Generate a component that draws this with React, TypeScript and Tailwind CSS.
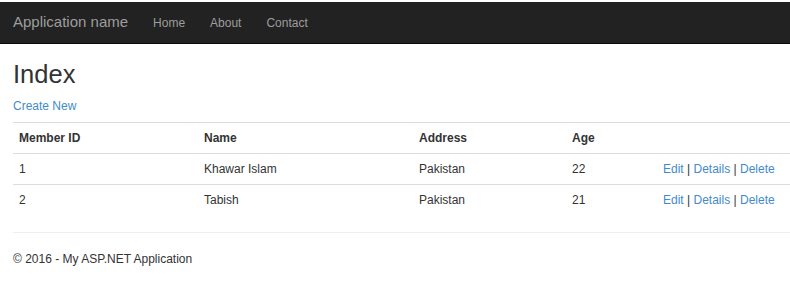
const members = [
  { id: '1', name: 'Khawar Islam', address: 'Pakistan', age: '22' },
  { id: '2', name: 'Tabish', address: 'Pakistan', age: '21' },
]

const Actions = () => (
  <span>
    <a href="#" className="text-[#428bca]">Edit</a> |{' '}
    <a href="#" className="text-[#428bca]">Details</a> |{' '}
    <a href="#" className="text-[#428bca]">Delete</a>
  </span>
)

export default function App() {
  return (
    <div className="w-[790px] h-[286px] bg-white pt-[2px] text-[12px] text-[#333] overflow-hidden" style={{ fontFamily: '"Liberation Sans", Arial, sans-serif' }}>
      <header className="h-[42px] bg-[#222] border-b border-[#080808] flex items-center">
        <a href="#" className="pl-[13px] text-[15px] text-[#9d9d9d]">Application name</a>
        <nav className="flex ml-[25px] gap-[25px] text-[12px] text-[#9d9d9d]">
          <a href="#">Home</a>
          <a href="#">About</a>
          <a href="#">Contact</a>
        </nav>
      </header>

      <main className="pl-[13px]">
        <h2 className="text-[25.5px] leading-[1.1] mt-[16px] mb-[10px]">Index</h2>
        <a href="#" className="block text-[#428bca] leading-[17px]">Create New</a>

        <table className="mt-[7px] w-[777px] border-collapse table-fixed">
          <thead>
            <tr className="border-t border-[#ddd]">
              <th className="w-[185px] text-left font-bold px-[6px] h-[31px]">Member ID</th>
              <th className="w-[215px] text-left font-bold px-[6px]">Name</th>
              <th className="w-[153px] text-left font-bold px-[6px]">Address</th>
              <th className="w-[91px] text-left font-bold px-[6px]">Age</th>
              <th className="px-[6px]"></th>
            </tr>
          </thead>
          <tbody>
            {members.map((m) => (
              <tr key={m.id} className="border-t border-[#ddd]">
                <td className="px-[6px] h-[31px]">{m.id}</td>
                <td className="px-[6px]">{m.name}</td>
                <td className="px-[6px]">{m.address}</td>
                <td className="px-[6px]">{m.age}</td>
                <td className="px-[6px]"><Actions /></td>
              </tr>
            ))}
          </tbody>
        </table>

        <footer className="mt-[16px] border-t border-[#eee] pt-[17px]">
          <p>© 2016 - My ASP.NET Application</p>
        </footer>
      </main>
    </div>
  )
}
